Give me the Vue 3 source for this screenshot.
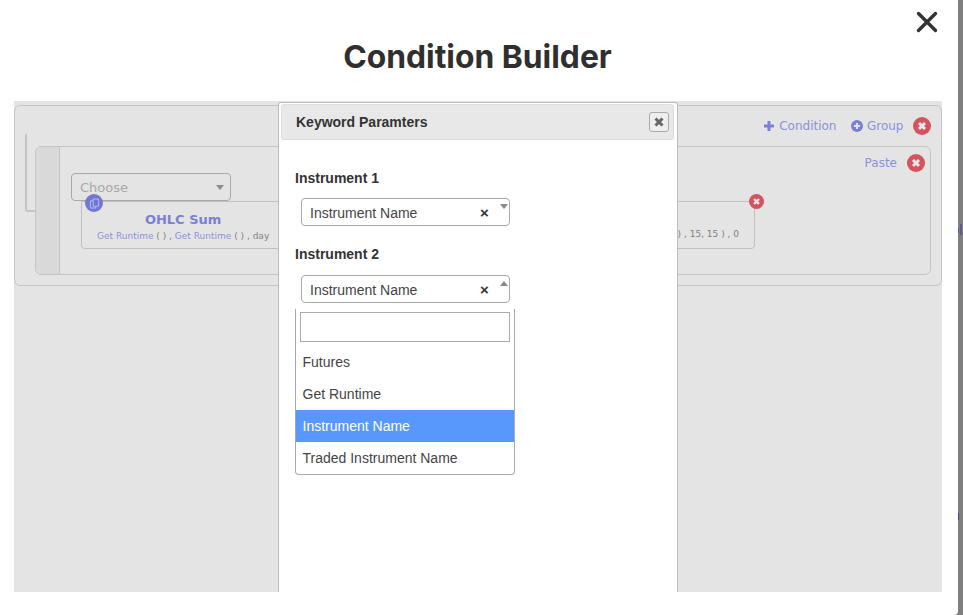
<template>
  <div class="page">
    <div class="sheet">
      <svg class="sheet-close" width="22" height="22" viewBox="0 0 22 22">
        <path d="M2.500 2.500L19.500 19.500M19.500 2.500L2.500 19.500" stroke="#333" stroke-width="3.400" stroke-linecap="round" fill="none" />
      </svg>
      <h1 class="title">Condition Builder</h1>

      <div class="canvas">
        <div class="panel">
          <div class="panel-actions">
            <a class="link">
              <svg width="12" height="12" viewBox="0 0 12 12"><path d="M6 1v10M1 6h10" stroke="#7a80d8" stroke-width="3" fill="none" /></svg>
              Condition
            </a>
            <a class="link">
              <svg width="12" height="12" viewBox="0 0 12 12"><circle cx="6" cy="6" r="6" fill="#7a80d8" /><path d="M6 3v6M3 6h6" stroke="#e4e4e4" stroke-width="2" fill="none" /></svg>
              Group
            </a>
            <span class="remove">
              <svg viewBox="0 0 18 18"><path d="M6 6l6 6M12 6l-6 6" stroke="#e8e8e8" stroke-width="3" fill="none" /></svg>
            </span>
          </div>

          <div class="connector"></div>

          <div class="group">
            <div class="group-grip"></div>
            <div class="group-body">
              <div class="group-actions">
                <a class="link">Paste</a>
                <span class="remove">
                  <svg viewBox="0 0 18 18"><path d="M6 6l6 6M12 6l-6 6" stroke="#e8e8e8" stroke-width="3" fill="none" /></svg>
                </span>
              </div>
              <div class="choose">
                <span>Choose</span>
                <i class="caret-down"></i>
              </div>
              <div class="card">
                <span class="copy-badge">
                  <svg width="11" height="11" viewBox="0 0 12 12" fill="none" stroke="#b9bcec" stroke-width="1.100">
                    <rect x="4.500" y="1" width="6" height="8" rx="1" />
                    <path d="M4 3H2.500a1 1 0 0 0-1 1v6a1 1 0 0 0 1 1h4a1 1 0 0 0 1-1V9.500" />
                  </svg>
                </span>
                <span class="card-remove">
                  <svg viewBox="0 0 15 15"><path d="M5 5l5 5M10 5l-5 5" stroke="#e8e8e8" stroke-width="2.400" fill="none" /></svg>
                </span>
                <div class="card-left">
                  <div class="card-title">OHLC Sum</div>
                  <div class="card-args">
                    <span class="fn">Get Runtime</span> ( ) , <span class="fn">Get Runtime</span> ( ) , day
                  </div>
                </div>
                <div class="card-args card-right">) , 15, 15 ) , 0</div>
              </div>
            </div>
          </div>
        </div>

        <div class="modal">
          <div class="modal-head">
            <span>Keyword Paramters</span>
            <button class="modal-close">
              <svg width="12" height="12" viewBox="0 0 12 12"><path d="M2.500 2.500l7 7M9.500 2.500l-7 7" stroke="#666" stroke-width="3" fill="none" /></svg>
            </button>
          </div>
          <div class="modal-body">
            <label class="field-label">Instrument 1</label>
            <div class="select">
              <span class="select-value">Instrument Name</span>
              <span class="select-clear">×</span>
              <i class="select-arrow"></i>
            </div>

            <label class="field-label second">Instrument 2</label>
            <div class="select">
              <span class="select-value">Instrument Name</span>
              <span class="select-clear">×</span>
              <i class="select-arrow up"></i>
            </div>
            <div class="dropdown">
              <div class="search"></div>
              <div
                v-for="opt in options"
                :key="opt"
                class="option"
                :class="{ active: opt === selected }"
              >
                {{ opt }}
              </div>
            </div>
          </div>
        </div>
      </div>
    </div>
    <div class="backdrop">
      <i class="peek peek-a"></i>
      <i class="peek peek-b"></i>
      <i class="peek peek-c"></i>
    </div>
  </div>
</template>

<script setup>
const options = ['Futures', 'Get Runtime', 'Instrument Name', 'Traded Instrument Name']
const selected = 'Instrument Name'
</script>

<style>
html, body {
  margin: 0;
  overflow: hidden;
  background: #808080;
}
</style>

<style scoped>
.page {
  width: 963px;
  height: 615px;
  display: flex;
  overflow: hidden;
  font-family: "Liberation Sans", sans-serif;
  color: #333;
}
.sheet {
  width: 958px;
  height: 615px;
  flex: none;
  background: #fff;
  border-bottom-right-radius: 4px;
  display: flex;
  flex-direction: column;
  position: relative;
}
.backdrop {
  flex: 1;
  background: #7f7f7f;
  position: relative;
}
.peek {
  position: absolute;
}
.peek-a {
  left: 0;
  top: 228px;
  width: 1px;
  height: 5px;
  background: #3f55a8;
}
.peek-b {
  left: 2px;
  top: 224px;
  width: 2px;
  height: 11px;
  background: #5f5c8c;
}
.peek-c {
  left: 0;
  top: 513px;
  width: 1px;
  height: 7px;
  background: #3a48a0;
}
.sheet-close {
  position: absolute;
  left: 916px;
  top: 11px;
}
.title {
  margin: 0;
  padding: 37px 3px 0 0;
  height: 101px;
  box-sizing: border-box;
  line-height: 40px;
  text-align: center;
  font-family: Inter, sans-serif;
  font-size: 31.800px;
  font-weight: 700;
  color: #2f2f2f;
}
.canvas {
  margin: 0 16px 23px 14px;
  flex: 1;
  background: #e4e4e4;
  padding-top: 4px;
  position: relative;
}
.panel {
  height: 181px;
  box-sizing: border-box;
  border: 1px solid #c4c4c4;
  border-radius: 6px;
  padding: 0 10px 10px 20px;
  display: flex;
  flex-direction: column;
  position: relative;
  font-family: "DejaVu Sans", sans-serif;
}
.panel-actions {
  height: 40px;
  display: flex;
  align-items: center;
  justify-content: flex-end;
  gap: 14.500px;
}
.link {
  display: inline-flex;
  align-items: center;
  gap: 4px;
  font-size: 12px;
  color: #8c91dd;
}
.remove {
  width: 18px;
  height: 18px;
  border-radius: 50%;
  background: #d4535f;
  display: inline-block;
  margin-left: -5px;
}
.remove svg {
  display: block;
  width: 18px;
  height: 18px;
}
.connector {
  position: absolute;
  left: 10px;
  top: 28px;
  width: 9px;
  height: 76px;
  border-left: 2px solid #c4c4c4;
  border-bottom: 2px solid #c4c4c4;
  border-bottom-left-radius: 3px;
}
.group {
  flex: 1;
  display: flex;
  border: 1px solid #c4c4c4;
  border-radius: 6px;
}
.group-grip {
  width: 23px;
  background: #d9d9d9;
  border-right: 1px solid #c4c4c4;
  border-radius: 5px 0 0 5px;
}
.group-body {
  flex: 1;
  padding: 0 5px 0 11px;
  display: flex;
  flex-direction: column;
  align-items: flex-start;
  position: relative;
}
.group-actions {
  position: absolute;
  right: 5px;
  top: 7px;
  display: flex;
  align-items: center;
  gap: 15px;
}
.choose {
  margin-top: 26px;
  width: 160px;
  height: 28px;
  box-sizing: border-box;
  border: 1px solid #a9a9a9;
  border-radius: 4px;
  padding: 0 6px 0 8px;
  display: flex;
  align-items: center;
  justify-content: space-between;
  font-size: 13px;
  color: #a8a8a8;
}
.caret-down {
  width: 0;
  height: 0;
  border-left: 4px solid transparent;
  border-right: 4px solid transparent;
  border-top: 5px solid #8c8c8c;
}
.card {
  margin-left: 10px;
  width: 674px;
  height: 48px;
  box-sizing: border-box;
  border: 1px solid #c0c0c0;
  border-radius: 0 0 4px 4px;
  padding: 11px 15px 0;
  display: flex;
  justify-content: space-between;
  position: relative;
}
.copy-badge {
  position: absolute;
  left: 3px;
  top: -8px;
  width: 18px;
  height: 18px;
  border-radius: 50%;
  background: #7077d6;
  display: flex;
  align-items: center;
  justify-content: center;
}
.card-remove {
  position: absolute;
  right: -10px;
  top: -8px;
  width: 15px;
  height: 15px;
  border-radius: 50%;
  background: #d4535f;
}
.card-remove svg {
  display: block;
  width: 15px;
  height: 15px;
}
.card-left {
  text-align: center;
}
.card-title {
  font-size: 13px;
  line-height: 14px;
  font-weight: 700;
  color: #7a80d8;
}
.card-args {
  margin-top: 3px;
  font-size: 9px;
  line-height: 12px;
  color: #808080;
}
.card-right {
  align-self: flex-end;
  margin-bottom: 8px;
}
.fn {
  color: #8c91dd;
}
.modal {
  position: absolute;
  left: 264px;
  top: 1px;
  width: 400px;
  bottom: 0;
  box-sizing: border-box;
  background: #fff;
  border: 1px solid #bdbdbd;
  border-bottom: none;
  border-radius: 3px 3px 0 0;
  padding: 1px 3px 0 2px;
  font-size: 14px;
}
.modal-head {
  height: 36px;
  box-sizing: border-box;
  background: #e8e8e8;
  border: 1px solid #ddd;
  border-radius: 3px;
  padding: 0 4px 0 14px;
  display: flex;
  align-items: center;
  justify-content: space-between;
  font-weight: 700;
  color: #333;
}
.modal-close {
  width: 20px;
  height: 20px;
  padding: 0;
  box-sizing: border-box;
  background: #eee;
  border: 1px solid #aaa;
  border-radius: 3px;
  display: flex;
  align-items: center;
  justify-content: center;
}
.modal-body {
  padding: 30px 14px 0;
}
.field-label {
  display: block;
  font-weight: 700;
  line-height: 16px;
  color: #333;
}
.field-label.second {
  margin: 20px 0 13px;
}
.field-label.second + .select {
  margin-top: 0;
}
.select {
  margin: 12px 0 0 6px;
  width: 209px;
  height: 28px;
  box-sizing: border-box;
  border: 1px solid #aaa;
  border-radius: 4px;
  padding: 1px 0 0 8px;
  display: flex;
  align-items: center;
  position: relative;
  color: #444;
}
.select-value {
  flex: 1;
}
.select-clear {
  position: absolute;
  left: 178px;
  top: 4px;
  font-weight: 700;
  font-size: 15px;
  line-height: 20px;
  color: #333;
}
.select-arrow {
  position: absolute;
  right: 1px;
  top: 5px;
  border-left: 4px solid transparent;
  border-right: 4px solid transparent;
  border-top: 5px solid #888;
}
.select-arrow.up {
  border-top: none;
  border-bottom: 5px solid #888;
}
.dropdown {
  margin-top: 6px;
  width: 220px;
  box-sizing: border-box;
  border: 1px solid #aaa;
  border-top: none;
  border-radius: 0 0 4px 4px;
  padding-top: 3px;
  color: #444;
}
.search {
  margin: 0 4px 4px;
  height: 30px;
  width: 210px;
  box-sizing: border-box;
  border: 1px solid #aaa;
}
.option {
  height: 32px;
  line-height: 32px;
  padding-left: 6.500px;
}
.option.active {
  background: #5897fb;
  color: #fff;
}
</style>
